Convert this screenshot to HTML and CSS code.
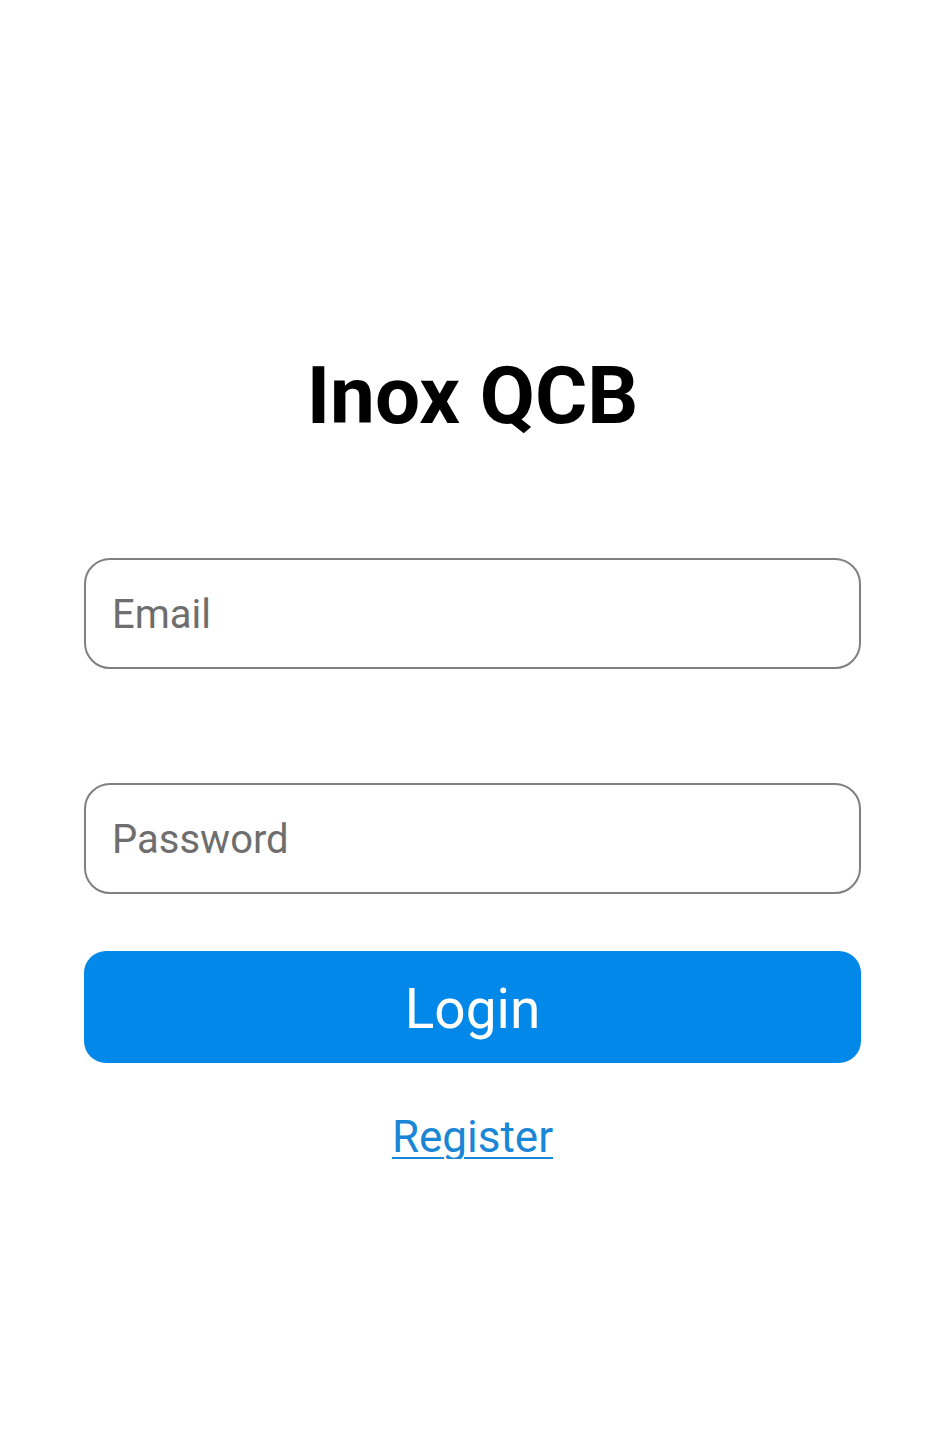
FILE: index.html
```html
<!DOCTYPE html>
<html lang="en">
<head>
<meta charset="utf-8">
<title>Inox QCB</title>
<link rel="stylesheet" href="styles.css">
</head>
<body>
<main class="page">
  <h1 class="title">Inox QCB</h1>
  <form class="form">
    <input class="field field-email" type="email" placeholder="Email">
    <input class="field field-password" type="password" placeholder="Password">
    <button class="btn" type="button">Login</button>
  </form>
  <a class="link" href="#">Register</a>
</main>
</body>
</html>
```

FILE: styles.css
```css
html, body {
  margin: 0;
  padding: 0;
  background: #ffffff;
}
body {
  font-family: Roboto, "Noto Sans", Arial, sans-serif;
}
.page {
  display: flex;
  flex-direction: column;
  align-items: center;
  padding: 356px 84px 0;
}
.title {
  margin: 0;
  font-size: 80px;
  line-height: 80px;
  font-weight: 700;
  color: #000000;
}
.form {
  display: flex;
  flex-direction: column;
  width: 100%;
  margin-top: 122px;
}
.field {
  box-sizing: border-box;
  width: 100%;
  height: 111px;
  border: 2px solid #808080;
  border-radius: 26px;
  padding: 2px 24px 0 26px;
  font-family: Roboto, "Noto Sans", Arial, sans-serif;
  font-size: 40px;
  color: #222;
  background: #fff;
  outline: none;
}
.field::placeholder {
  color: #6e6e6e;
  opacity: 1;
}
.field-password {
  margin-top: 114px;
}
.btn {
  box-sizing: border-box;
  margin-top: 57px;
  width: 100%;
  height: 112px;
  border: none;
  border-radius: 22px;
  background: #0288e9;
  color: #ffffff;
  font-family: Roboto, "Noto Sans", Arial, sans-serif;
  font-size: 55px;
  line-height: 1;
  padding: 4px 0 0;
}
.link {
  margin-top: 52px;
  font-size: 44px;
  line-height: 44px;
  color: #1a86d6;
  text-decoration: underline;
  text-underline-offset: 5px;
  text-decoration-thickness: 2px;
}
```
